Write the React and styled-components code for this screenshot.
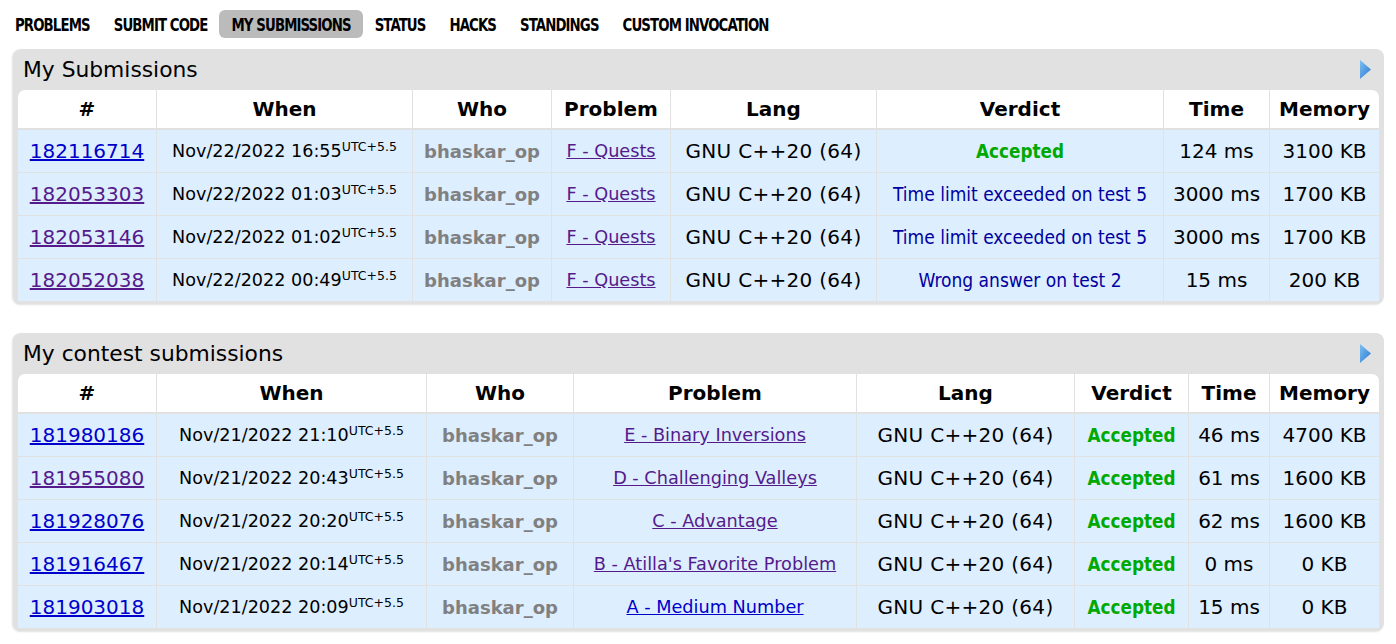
import React from 'react'
import styled, { createGlobalStyle } from 'styled-components'

const GlobalStyle = createGlobalStyle`
  html, body {
    margin: 0;
    padding: 0;
    background: #fff;
  }
  body {
    font-family: "DejaVu Sans", Verdana, sans-serif;
    color: #000;
  }
`

const Page = styled.div`
  padding: 10px 12px 0 13px;
`

const Menu = styled.ul`
  display: flex;
  list-style: none;
  margin: 0 0 11px -10px;
  padding: 0;
`

const MenuItem = styled.li`
  height: 28px;
  display: flex;
  align-items: center;
  padding: 0 12px;
  border-radius: 6px;
  background: ${(p) => (p.active ? '#bbbbbb' : 'transparent')};
  font-family: "DejaVu Sans Condensed", "DejaVu Sans", sans-serif;
  font-stretch: condensed;
  font-weight: bold;
  font-size: 14.8px;
  letter-spacing: -0.9px;
  color: #000;
`

const MenuLabel = styled.span`
  display: inline-block;
  transform: scaleY(1.22);
`

const Panel = styled.div`
  background: #e1e1e1;
  border-radius: 8px;
  padding: 0 5px 3px;
  margin-bottom: 29px;
  box-shadow: -1px 1px 2px rgba(0, 0, 0, 0.12);
`

const PanelTitle = styled.div`
  height: 41px;
  display: flex;
  align-items: center;
  justify-content: space-between;
  padding: 0 7px 0 5px;
  font-size: 21.8px;
`

const TableWrap = styled.div`
  border-radius: 7px 7px 0 0;
  overflow: hidden;
`

const Table = styled.table`
  width: 100%;
  table-layout: fixed;
  border-collapse: separate;
  border-spacing: 0;
`

const Th = styled.th`
  height: 38px;
  background: #fff;
  font-weight: bold;
  font-size: 20px;
  text-align: center;
  padding: 0;
  border-right: 1px solid #e1e1e1;
  border-bottom: 2px solid #e1e1e1;
  &:last-child { border-right: none; }
`

const Td = styled.td`
  height: 42px;
  background: #ddeeff;
  text-align: center;
  vertical-align: middle;
  padding: 0 4px;
  white-space: nowrap;
  border-right: 1px solid #e1e1e1;
  border-bottom: 1px solid #e1e1e1;
  &:last-child { border-right: none; }
  tr:last-child > & { border-bottom: none; }
`

const IdLink = styled.a`
  font-size: 20px;
  color: ${(p) => (p.visited ? '#551a8b' : '#0000cc')};
  text-decoration: underline;
`

const When = styled.span`
  font-size: 17.6px;
  sup {
    font-size: 12.5px;
    vertical-align: 6px;
    line-height: 0;
  }
`

const Who = styled.span`
  font-size: 18px;
  font-weight: bold;
  color: #808080;
`

const ProblemLink = styled.a`
  font-size: 17.7px;
  color: ${(p) => (p.visited ? '#551a8b' : '#0000cc')};
  text-decoration: underline;
`

const Lang = styled.span`
  font-size: 20px;
  letter-spacing: 0.3px;
`

const Verdict = styled.span`
  font-family: "DejaVu Sans Condensed", "DejaVu Sans", sans-serif;
  font-stretch: condensed;
  font-size: ${(p) => (p.ok ? '18.7px' : '19px')};
  font-weight: ${(p) => (p.ok ? 'bold' : 'normal')};
  color: ${(p) => (p.ok ? '#00a900' : '#0000a0')};
`

const Plain = styled.span`
  font-size: 20px;
`

const Arrow = () => (
  <svg width="13" height="21" viewBox="0 0 13 21">
    <defs>
      <linearGradient id="arrowGrad" x1="0" y1="0" x2="1" y2="1">
        <stop offset="0" stopColor="#7cc0f2" />
        <stop offset="1" stopColor="#2b78d0" />
      </linearGradient>
    </defs>
    <polygon points="1,1 12,10.5 1,20" fill="url(#arrowGrad)" />
  </svg>
)

const headers = ['#', 'When', 'Who', 'Problem', 'Lang', 'Verdict', 'Time', 'Memory']

const mySubs = [
  { id: '182116714', idV: false, when: 'Nov/22/2022 16:55', prob: 'F - Quests', probV: true, verdict: 'Accepted', ok: true, time: '124 ms', mem: '3100 KB' },
  { id: '182053303', idV: true, when: 'Nov/22/2022 01:03', prob: 'F - Quests', probV: true, verdict: 'Time limit exceeded on test 5', time: '3000 ms', mem: '1700 KB' },
  { id: '182053146', idV: true, when: 'Nov/22/2022 01:02', prob: 'F - Quests', probV: true, verdict: 'Time limit exceeded on test 5', time: '3000 ms', mem: '1700 KB' },
  { id: '182052038', idV: true, when: 'Nov/22/2022 00:49', prob: 'F - Quests', probV: true, verdict: 'Wrong answer on test 2', time: '15 ms', mem: '200 KB' },
]

const contestSubs = [
  { id: '181980186', idV: false, when: 'Nov/21/2022 21:10', prob: 'E - Binary Inversions', probV: true, verdict: 'Accepted', ok: true, time: '46 ms', mem: '4700 KB' },
  { id: '181955080', idV: true, when: 'Nov/21/2022 20:43', prob: 'D - Challenging Valleys', probV: true, verdict: 'Accepted', ok: true, time: '61 ms', mem: '1600 KB' },
  { id: '181928076', idV: false, when: 'Nov/21/2022 20:20', prob: 'C - Advantage', probV: true, verdict: 'Accepted', ok: true, time: '62 ms', mem: '1600 KB' },
  { id: '181916467', idV: false, when: 'Nov/21/2022 20:14', prob: "B - Atilla's Favorite Problem", probV: true, verdict: 'Accepted', ok: true, time: '0 ms', mem: '0 KB' },
  { id: '181903018', idV: false, when: 'Nov/21/2022 20:09', prob: 'A - Medium Number', probV: false, verdict: 'Accepted', ok: true, time: '15 ms', mem: '0 KB' },
]

const SubmissionsPanel = ({ title, cols, rows }) => (
  <Panel>
    <PanelTitle>
      <span>{title}</span>
      <Arrow />
    </PanelTitle>
    <TableWrap>
      <Table>
        <colgroup>
          {cols.map((w, i) => (
            <col key={i} style={{ width: w }} />
          ))}
        </colgroup>
        <thead>
          <tr>
            {headers.map((h) => (
              <Th key={h}>{h}</Th>
            ))}
          </tr>
        </thead>
        <tbody>
          {rows.map((r) => (
            <tr key={r.id}>
              <Td><IdLink href="#" visited={r.idV}>{r.id}</IdLink></Td>
              <Td><When>{r.when}<sup>UTC+5.5</sup></When></Td>
              <Td><Who>bhaskar_op</Who></Td>
              <Td><ProblemLink href="#" visited={r.probV}>{r.prob}</ProblemLink></Td>
              <Td><Lang>GNU C++20 (64)</Lang></Td>
              <Td><Verdict ok={r.ok}>{r.verdict}</Verdict></Td>
              <Td><Plain>{r.time}</Plain></Td>
              <Td><Plain>{r.mem}</Plain></Td>
            </tr>
          ))}
        </tbody>
      </Table>
    </TableWrap>
  </Panel>
)

const menu = ['PROBLEMS', 'SUBMIT CODE', 'MY SUBMISSIONS', 'STATUS', 'HACKS', 'STANDINGS', 'CUSTOM INVOCATION']

export default function App() {
  return (
    <>
      <GlobalStyle />
      <Page>
        <Menu>
          {menu.map((m) => (
            <MenuItem key={m} active={m === 'MY SUBMISSIONS'}>
              <MenuLabel>{m}</MenuLabel>
            </MenuItem>
          ))}
        </Menu>
        <SubmissionsPanel
          title="My Submissions"
          cols={[139, 256, 139, 119, 206, 287, 106, 109]}
          rows={mySubs}
        />
        <SubmissionsPanel
          title="My contest submissions"
          cols={[139, 270, 147, 283, 218, 114, 81, 109]}
          rows={contestSubs}
        />
      </Page>
    </>
  )
}
